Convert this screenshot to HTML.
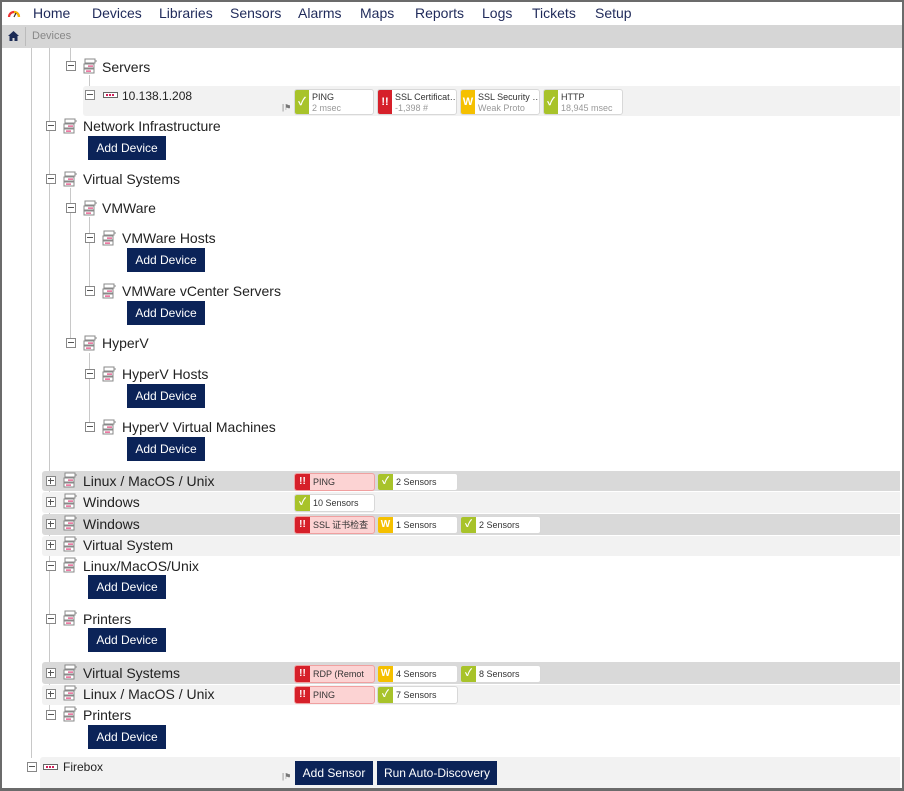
<!DOCTYPE html>
<html><head><meta charset="utf-8"><style>
*{margin:0;padding:0;box-sizing:border-box}
body{width:904px;height:791px;overflow:hidden;background:#fff;font-family:"Liberation Sans","Noto Sans CJK SC",sans-serif;position:relative}
.frame{position:absolute;left:0;top:0;width:904px;height:791px;border:2px solid #6b6b6b;border-bottom-width:3px;pointer-events:none;z-index:50}
.a{position:absolute}
.nav{left:0;top:0;width:904px;height:25px;background:#fff}
.nav span{position:absolute;top:5px;font-size:14px;color:#1f2a5a}
.bc{left:0;top:25px;width:904px;height:23px;background:#d6d6d6}
.vl{position:absolute;width:1px;background:#c8c8c8}
.lbl{position:absolute;font-size:14px;color:#222;white-space:nowrap}
.box{position:absolute;width:10px;height:10px;border:1px solid #888;background:#fff}
.box:after{content:"";position:absolute;left:1px;top:3px;width:6px;height:1px;background:#555}
.box.p:before{content:"";position:absolute;left:3px;top:1px;width:1px;height:6px;background:#555}
.btn{position:absolute;background:#0b2358;color:#fff;font-size:12px;text-align:center;line-height:24px;height:24px;width:78px}
.row{position:absolute;left:42px;width:858px;border-radius:3px 0 0 3px}
.g{background:#d9d9d9}.l{background:#f2f2f2}
.chip{position:absolute;height:18px;width:81px;border:1px solid #d8d8d8;border-radius:3px;background:#fff;font-size:9px;color:#333;line-height:16px;padding-left:18px;white-space:nowrap;overflow:hidden}
.chip i{position:absolute;left:0;top:0;width:15px;height:16px;color:#fff;font-style:normal;font-weight:bold;text-align:center;font-size:10px}
.r{background:#fcd3d3;border-color:#f0a0a0}.r i{background:#d6202a}
.y i{background:#f5c000}.k i{background:#a8c32a}
.chip2{position:absolute;height:26px;width:80px;border:1px solid #d8d8d8;border-radius:3px;background:#fff;font-size:9px;color:#333;line-height:11px;padding:2px 0 0 17px;white-space:nowrap;overflow:hidden}
.chip2 i{position:absolute;left:0;top:0;width:14px;height:24px;color:#fff;font-style:normal;font-weight:bold;text-align:center;font-size:11px;line-height:24px}
.chip2 em{font-style:normal;color:#999}
.flag{position:absolute;font-size:8px;color:#777}
</style></head><body>
<div class="frame"></div>
<div class="a nav">
<svg class="a" style="left:7px;top:8px" width="14" height="10" viewBox="0 0 14 10"><path d="M2 9A5 5 0 0 1 12 9" fill="none" stroke="#e33" stroke-width="2.2"/><path d="M7 4A5 5 0 0 1 12 9" fill="none" stroke="#f8b800" stroke-width="2.2"/><path d="M7 9L9 5" stroke="#333" stroke-width="1.2"/></svg>
<span style="left:33px">Home</span><span style="left:92px">Devices</span><span style="left:159px">Libraries</span><span style="left:230px">Sensors</span><span style="left:298px">Alarms</span><span style="left:360px">Maps</span><span style="left:415px">Reports</span><span style="left:482px">Logs</span><span style="left:532px">Tickets</span><span style="left:595px">Setup</span>
</div>
<div class="a bc"><svg class="a" style="left:8px;top:6px" width="11" height="10" viewBox="0 0 11 10"><path d="M5.5 0L0 5h1.5v5h3V7h2v3h3V5H11z" fill="#1b2a55"/></svg><div class="a" style="left:25px;top:2px;width:1px;height:19px;background:#bbb"></div><span class="a" style="left:32px;top:5px;font-size:11px;color:#888">Devices</span></div>

<!-- tree lines -->
<div class="vl" style="left:31px;top:48px;height:710px"></div>
<div class="vl" style="left:49px;top:48px;height:665px"></div>
<div class="vl" style="left:70px;top:48px;height:15px"></div>
<div class="vl" style="left:89px;top:75px;height:15px"></div>
<div class="vl" style="left:70px;top:188px;height:152px"></div>
<div class="vl" style="left:89px;top:217px;height:70px"></div>
<div class="vl" style="left:89px;top:353px;height:70px"></div>

<!-- rows bg -->
<div class="row l" style="left:83px;top:86px;height:30px;width:817px"></div>
<div class="row g" style="top:471px;height:20px"></div>
<div class="row l" style="top:492px;height:21px"></div>
<div class="row g" style="top:514px;height:21px"></div>
<div class="row l" style="top:536px;height:20px"></div>
<div class="row g" style="top:662px;height:22px"></div>
<div class="row l" style="top:685px;height:20px"></div>
<div class="row l" style="left:40px;top:757px;height:33px;width:860px"></div>

<svg width="0" height="0" style="position:absolute"><defs><g id="gi"><rect x="2" y="1" width="10" height="4" fill="#fff" stroke="#888"/><rect x="1" y="6" width="10" height="4" fill="#fff" stroke="#888"/><rect x="1" y="11" width="10" height="4" fill="#fff" stroke="#888"/><rect x="5" y="7.5" width="5" height="1.2" fill="#e0407a"/><rect x="3" y="12.5" width="5" height="1.2" fill="#e0407a"/><path d="M12 3h2" stroke="#888"/></g><g id="di"><rect x="0.5" y="1.5" width="14" height="5" fill="#fff" stroke="#666"/><rect x="3" y="3" width="2" height="2" fill="#d0205a"/><rect x="6" y="3" width="2" height="2" fill="#d0205a"/><rect x="9" y="3" width="2" height="2" fill="#d0205a"/></g></defs></svg>

<!-- Servers -->
<div class="box" style="left:66px;top:61px"></div><svg class="a" style="left:83px;top:58px" width="16" height="17"><use href="#gi"/></svg><div class="lbl" style="left:102px;top:59px">Servers</div>
<div class="box" style="left:85px;top:90px"></div><svg class="a" style="left:103px;top:91px" width="16" height="8"><use href="#di"/></svg><div class="lbl" style="left:122px;top:89px;font-size:12px">10.138.1.208</div>
<span class="flag" style="left:282px;top:103px">|⚑</span>
<div class="chip2 k" style="left:294px;top:89px"><i>✓</i>PING<br><em>2 msec</em></div>
<div class="chip2 r" style="left:377px;top:89px"><i>!!</i>SSL Certificat…<br><em>-1,398 #</em></div>
<div class="chip2 y" style="left:460px;top:89px"><i>W</i>SSL Security …<br><em>Weak Proto</em></div>
<div class="chip2 k" style="left:543px;top:89px"><i>✓</i>HTTP<br><em>18,945 msec</em></div>

<!-- Network Infrastructure -->
<div class="box" style="left:46px;top:121px"></div><svg class="a" style="left:63px;top:118px" width="16" height="17"><use href="#gi"/></svg><div class="lbl" style="left:83px;top:118px">Network Infrastructure</div>
<div class="btn" style="left:88px;top:136px">Add Device</div>

<div class="box" style="left:46px;top:174px"></div><svg class="a" style="left:63px;top:171px" width="16" height="17"><use href="#gi"/></svg><div class="lbl" style="left:83px;top:171px">Virtual Systems</div>
<div class="box" style="left:66px;top:203px"></div><svg class="a" style="left:83px;top:200px" width="16" height="17"><use href="#gi"/></svg><div class="lbl" style="left:102px;top:200px">VMWare</div>
<div class="box" style="left:85px;top:233px"></div><svg class="a" style="left:102px;top:230px" width="16" height="17"><use href="#gi"/></svg><div class="lbl" style="left:122px;top:230px">VMWare Hosts</div>
<div class="btn" style="left:127px;top:248px">Add Device</div>
<div class="box" style="left:85px;top:286px"></div><svg class="a" style="left:102px;top:283px" width="16" height="17"><use href="#gi"/></svg><div class="lbl" style="left:122px;top:283px">VMWare vCenter Servers</div>
<div class="btn" style="left:127px;top:301px">Add Device</div>
<div class="box" style="left:66px;top:338px"></div><svg class="a" style="left:83px;top:335px" width="16" height="17"><use href="#gi"/></svg><div class="lbl" style="left:102px;top:335px">HyperV</div>
<div class="box" style="left:85px;top:369px"></div><svg class="a" style="left:102px;top:366px" width="16" height="17"><use href="#gi"/></svg><div class="lbl" style="left:122px;top:366px">HyperV Hosts</div>
<div class="btn" style="left:127px;top:384px">Add Device</div>
<div class="box" style="left:85px;top:422px"></div><svg class="a" style="left:102px;top:419px" width="16" height="17"><use href="#gi"/></svg><div class="lbl" style="left:122px;top:419px">HyperV Virtual Machines</div>
<div class="btn" style="left:127px;top:437px">Add Device</div>

<!-- groups -->
<div class="box p" style="left:46px;top:476px"></div><svg class="a" style="left:63px;top:472px" width="16" height="17"><use href="#gi"/></svg><div class="lbl" style="left:83px;top:473px">Linux / MacOS / Unix</div>
<div class="chip r" style="left:294px;top:473px"><i>!!</i>PING</div><div class="chip k" style="left:377px;top:473px"><i>✓</i>2 Sensors</div>
<div class="box p" style="left:46px;top:497px"></div><svg class="a" style="left:63px;top:493px" width="16" height="17"><use href="#gi"/></svg><div class="lbl" style="left:83px;top:494px">Windows</div>
<div class="chip k" style="left:294px;top:494px"><i>✓</i>10 Sensors</div>
<div class="box p" style="left:46px;top:519px"></div><svg class="a" style="left:63px;top:515px" width="16" height="17"><use href="#gi"/></svg><div class="lbl" style="left:83px;top:516px">Windows</div>
<div class="chip r" style="left:294px;top:516px"><i>!!</i>SSL 证书检查</div><div class="chip y" style="left:377px;top:516px"><i>W</i>1 Sensors</div><div class="chip k" style="left:460px;top:516px"><i>✓</i>2 Sensors</div>
<div class="box p" style="left:46px;top:540px"></div><svg class="a" style="left:63px;top:536px" width="16" height="17"><use href="#gi"/></svg><div class="lbl" style="left:83px;top:537px">Virtual System</div>
<div class="box" style="left:46px;top:561px"></div><svg class="a" style="left:63px;top:557px" width="16" height="17"><use href="#gi"/></svg><div class="lbl" style="left:83px;top:558px">Linux/MacOS/Unix</div>
<div class="btn" style="left:88px;top:575px">Add Device</div>
<div class="box" style="left:46px;top:614px"></div><svg class="a" style="left:63px;top:610px" width="16" height="17"><use href="#gi"/></svg><div class="lbl" style="left:83px;top:611px">Printers</div>
<div class="btn" style="left:88px;top:628px">Add Device</div>
<div class="box p" style="left:46px;top:668px"></div><svg class="a" style="left:63px;top:664px" width="16" height="17"><use href="#gi"/></svg><div class="lbl" style="left:83px;top:665px">Virtual Systems</div>
<div class="chip r" style="left:294px;top:665px"><i>!!</i>RDP (Remot</div><div class="chip y" style="left:377px;top:665px"><i>W</i>4 Sensors</div><div class="chip k" style="left:460px;top:665px"><i>✓</i>8 Sensors</div>
<div class="box p" style="left:46px;top:689px"></div><svg class="a" style="left:63px;top:685px" width="16" height="17"><use href="#gi"/></svg><div class="lbl" style="left:83px;top:686px">Linux / MacOS / Unix</div>
<div class="chip r" style="left:294px;top:686px"><i>!!</i>PING</div><div class="chip k" style="left:377px;top:686px"><i>✓</i>7 Sensors</div>
<div class="box" style="left:46px;top:710px"></div><svg class="a" style="left:63px;top:706px" width="16" height="17"><use href="#gi"/></svg><div class="lbl" style="left:83px;top:707px">Printers</div>
<div class="btn" style="left:88px;top:725px">Add Device</div>

<!-- Firebox -->
<div class="box" style="left:27px;top:762px"></div><svg class="a" style="left:43px;top:763px" width="16" height="8"><use href="#di"/></svg><div class="lbl" style="left:63px;top:760px;font-size:12px">Firebox</div>
<span class="flag" style="left:282px;top:772px">|⚑</span>
<div class="btn" style="left:295px;top:761px">Add Sensor</div>
<div class="btn" style="left:377px;top:761px;width:120px">Run Auto-Discovery</div>
</body></html>
